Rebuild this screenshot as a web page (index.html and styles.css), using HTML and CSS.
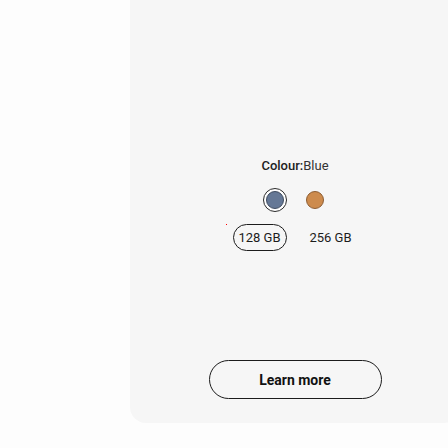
FILE: index.html
```
<!DOCTYPE html>
<html lang="en">
<head>
<meta charset="utf-8">
<link rel="stylesheet" href="styles.css">
</head>
<body>
<div class="page">
  <div class="card">
    <p class="label"><span class="label-key">Colour:</span><span class="label-val">Blue</span></p>
    <div class="swatches">
      <span class="swatch swatch-selected"><span class="dot dot-blue"></span></span>
      <span class="swatch"><span class="dot dot-orange"></span></span>
    </div>
    <div class="storage">
      <span class="marker"></span>
      <span class="opt opt-selected">128 GB</span>
      <span class="opt">256 GB</span>
    </div>
    <button class="cta">Learn more</button>
  </div>
</div>
</body>
</html>
```
FILE: styles.css
```
html, body {
  margin: 0;
  padding: 0;
  background: #fdfdfd;
}
body {
  font-family: "Roboto", "Liberation Sans", sans-serif;
  color: #1c1c1c;
}
.page {
  display: flex;
  padding-left: 130px;
  width: 448px;
  height: 448px;
  box-sizing: border-box;
  overflow: hidden;
}
.card {
  flex: none;
  width: 330px;
  height: 423px;
  background: #f6f6f6;
  border-radius: 0 0 16px 16px;
  display: flex;
  flex-direction: column;
  align-items: center;
  padding-top: 157px;
  box-sizing: border-box;
}
.label {
  margin: 0;
  font-size: 13px;
  line-height: 18px;
  color: #222;
}
.label-key {
  font-weight: 500;
}
.label-val {
  font-weight: 400;
  color: #333;
}
.swatches {
  display: flex;
  gap: 16px;
  margin-top: 13px;
}
.swatch {
  width: 24px;
  height: 24px;
  box-sizing: border-box;
  border-radius: 50%;
  display: flex;
  align-items: center;
  justify-content: center;
}
.swatch-selected {
  border: 1.5px solid #2a2a2a;
  background: #fff;
}
.dot {
  width: 18px;
  height: 18px;
  box-sizing: border-box;
  border-radius: 50%;
}
.dot-blue {
  background: #657896;
  border: 1px solid #3f4c60;
}
.dot-orange {
  background: #cd8b4d;
  border: 1px solid #8d5d32;
}
.storage {
  position: relative;
  display: flex;
  gap: 17px;
  margin-top: 12px;
}
.marker {
  position: absolute;
  left: -7px;
  top: 0;
  width: 1px;
  height: 1px;
  background: #ff0000;
}
.opt {
  width: 54px;
  height: 27px;
  box-sizing: border-box;
  display: flex;
  align-items: center;
  justify-content: center;
  font-size: 13px;
  color: #1c1c1c;
  border-radius: 14px;
}
.opt-selected {
  border: 1px solid #1c1c1c;
}
.cta {
  margin-top: 109px;
  width: 173px;
  height: 39px;
  border: 1px solid #1c1c1c;
  border-radius: 20px;
  background: transparent;
  font-family: "Roboto", "Liberation Sans", sans-serif;
  font-size: 14px;
  font-weight: 700;
  color: #111;
  padding: 0;
}
```
